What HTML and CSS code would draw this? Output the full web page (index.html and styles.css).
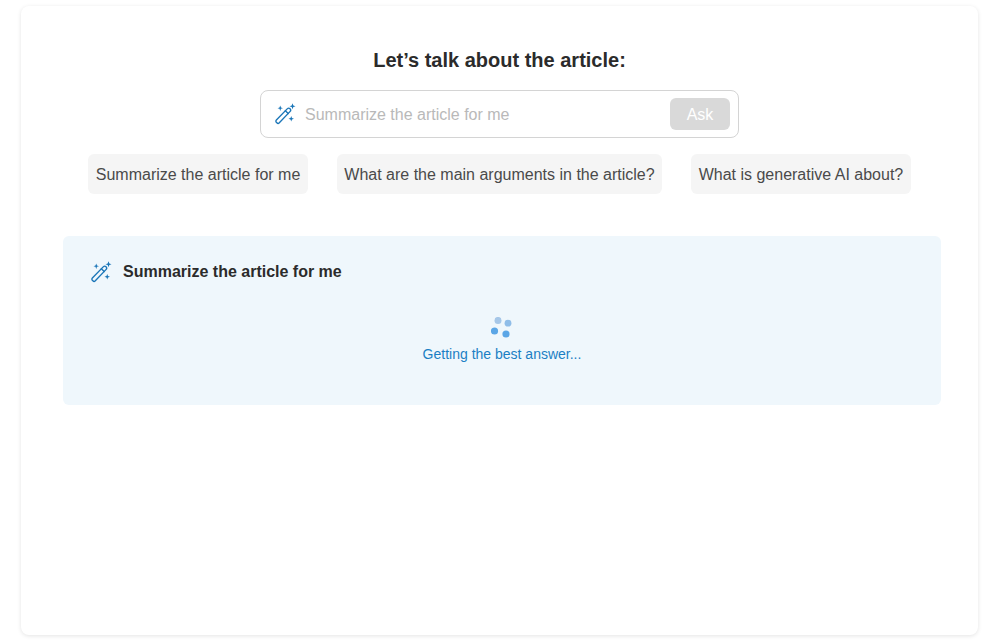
FILE: index.html
```html
<!DOCTYPE html>
<html lang="en">
<head>
<meta charset="utf-8">
<title>Let’s talk about the article</title>
<link rel="stylesheet" href="styles.css">
</head>
<body>
<main class="card">
  <h1 class="title">Let’s talk about the article:</h1>
  <div class="ask-box">
    <svg class="wand wand-input" viewBox="0 0 24 24" fill="none" aria-hidden="true">
      <path class="wand-stroke" d="M2.6 18.6 14.4 6.4c.9-.9 2.3-.9 3.1-.1.8.8.8 2.2-.1 3.1L5.8 21.6c-.8.8-1.9.8-2.7 0l-.6-.6c-.6-.6-.6-1.7.1-2.4Z"/>
      <path class="wand-stroke" d="m12.4 8.5 3.1 3"/>
      <path class="wand-spark" d="m20.2.2.9 2.4 2.4.9-2.4.9-.9 2.4-.9-2.4-2.4-.9 2.4-.9.9-2.4ZM6.8 2.6l.8 2.2 2.2.8-2.2.8-.8 2.2-.8-2.2-2.2-.8 2.2-.8.8-2.2ZM18.8 14.2l.8 2.2 2.2.8-2.2.8-.8 2.2-.8-2.2-2.2-.8 2.2-.8.8-2.2Z"/>
    </svg>
    <span class="placeholder">Summarize the article for me</span>
    <button class="ask-btn" type="button">Ask</button>
  </div>
  <div class="chips">
    <button class="chip" type="button">Summarize the article for me</button>
    <button class="chip" type="button">What are the main arguments in the article?</button>
    <button class="chip" type="button">What is generative AI about?</button>
  </div>
  <section class="answer">
    <div class="answer-head">
      <svg class="wand wand-answer" viewBox="0 0 24 24" fill="none" aria-hidden="true">
        <path class="wand-stroke" d="M2.6 18.6 14.4 6.4c.9-.9 2.3-.9 3.1-.1.8.8.8 2.2-.1 3.1L5.8 21.6c-.8.8-1.9.8-2.7 0l-.6-.6c-.6-.6-.6-1.7.1-2.4Z"/>
        <path class="wand-stroke" d="m12.4 8.5 3.1 3"/>
        <path class="wand-spark" d="m20.2.2.9 2.4 2.4.9-2.4.9-.9 2.4-.9-2.4-2.4-.9 2.4-.9.9-2.4ZM6.8 2.6l.8 2.2 2.2.8-2.2.8-.8 2.2-.8-2.2-2.2-.8 2.2-.8.8-2.2ZM18.8 14.2l.8 2.2 2.2.8-2.2.8-.8 2.2-.8-2.2-2.2-.8 2.2-.8.8-2.2Z"/>
      </svg>
      <h2 class="answer-title">Summarize the article for me</h2>
    </div>
    <div class="loading">
      <svg class="spinner" viewBox="0 0 22 22" aria-hidden="true">
        <circle class="dot-light" cx="7" cy="3.4" r="3.5"/>
        <circle class="dot-mid" cx="17" cy="6.2" r="3.4"/>
        <circle class="dot-strong" cx="3.5" cy="14" r="3.6"/>
        <circle class="dot-strong" cx="15" cy="17" r="3.6"/>
      </svg>
      <p class="loading-text">Getting the best answer...</p>
    </div>
  </section>
</main>
</body>
</html>
```
FILE: styles.css
```css
* { box-sizing: border-box; }
html, body { height: 100%; }
body {
  margin: 0;
  background: #fff;
  font-family: "Liberation Sans", Arial, sans-serif;
  padding: 6px 10px 6px 21px;
  overflow: hidden;
}
.card {
  height: 629px;
  background: #fff;
  border-radius: 8px;
  box-shadow: 0 1px 4px rgba(0,0,0,.11);
  padding: 43px 42px 0;
  display: flex;
  flex-direction: column;
  align-items: center;
}
.title {
  margin: 0 0 18px;
  font-size: 20px;
  line-height: 23px;
  font-weight: 700;
  color: #2b2b2b;
}
.ask-box {
  width: 479px;
  height: 48px;
  border: 1px solid #d4d4d4;
  border-radius: 8px;
  display: flex;
  align-items: center;
  padding: 0 8px 0 13px;
}
.wand { flex: none; }
.wand-input { width: 22px; height: 22px; }
.wand-answer { width: 22px; height: 22px; }
.wand-stroke { stroke: #1b76b8; stroke-width: 1.5; stroke-linejoin: round; stroke-linecap: round; }
.wand-spark { fill: #1b76b8; }
.placeholder {
  margin-left: 9px;
  padding-top: 1px;
  flex: 1;
  font-size: 16px;
  color: #b9b9b9;
}
.ask-btn {
  width: 60px;
  height: 32px;
  border: 0;
  border-radius: 6px;
  background: #d9d9d9;
  color: #fff;
  font: 16px "Liberation Sans", Arial, sans-serif;
  padding: 1px 0 0;
}
.chips {
  display: flex;
  gap: 29px;
  margin-top: 16px;
}
.chip {
  height: 40px;
  padding: 1px 7.5px 0;
  border: 0;
  border-radius: 6px;
  background: #f5f5f5;
  color: #4a4a4a;
  font: 16px "Liberation Sans", Arial, sans-serif;
  white-space: nowrap;
}
.answer {
  align-self: flex-start;
  width: 878px;
  height: 169px;
  margin-top: 42px;
  background: #eff7fc;
  border-radius: 6px;
  padding: 25px 27px 0;
}
.answer-head {
  display: flex;
  align-items: center;
  gap: 11px;
  height: 21px;
}
.answer-title {
  margin: 0;
  font-size: 16px;
  font-weight: 700;
  color: #2b2b2b;
}
.loading {
  margin-top: 35px;
  display: flex;
  flex-direction: column;
  align-items: center;
}
.spinner { width: 22px; height: 22px; }
.dot-light { fill: #a6c7e8; }
.dot-mid { fill: #8fbde8; }
.dot-strong { fill: #5ba6e6; }
.loading-text {
  margin: 7px 0 0;
  font-size: 14px;
  line-height: 16px;
  color: #1b7fc4;
}
```
